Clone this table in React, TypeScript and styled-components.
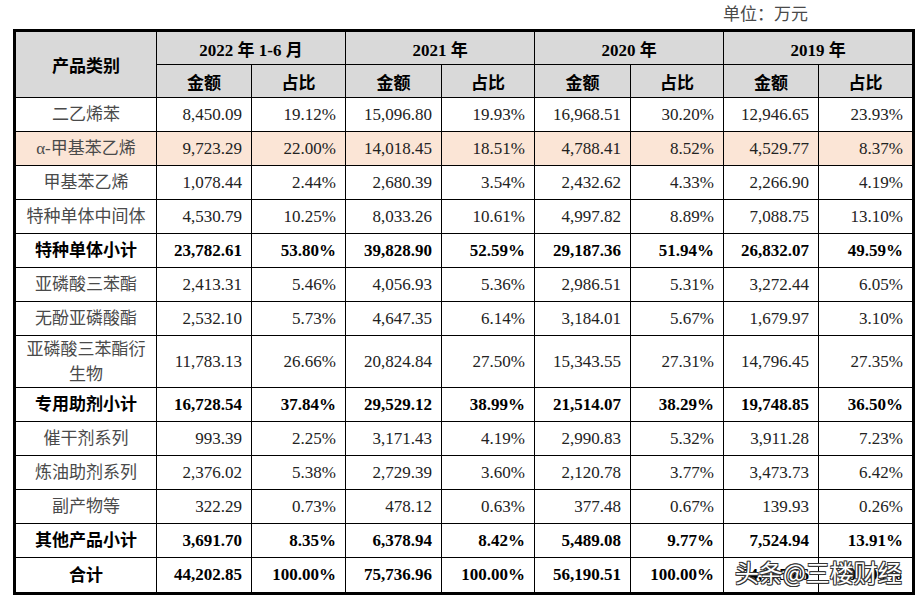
import React from "react";
import styled, { createGlobalStyle } from "styled-components";

const GlobalStyle = createGlobalStyle`
  *, *::before, *::after {
    box-sizing: border-box;
  }
  html, body {
    margin: 0;
    padding: 0;
    background: #ffffff;
  }
`;

const Page = styled.div`
  position: relative;
  width: 921px;
  height: 598px;
  padding: 4px 0 0 13px;
  font-family: "Liberation Serif", "Noto Sans CJK SC", serif;
  color: #1a1a1a;
  overflow: hidden;
`;

const Unit = styled.div`
  width: 902px;
  height: 25px;
  padding-right: 107px;
  text-align: right;
  font-size: 17px;
  line-height: 22px;
  color: #4a4a4a;
`;

const Table = styled.table`
  border-collapse: separate;
  border-spacing: 0;
  table-layout: fixed;
  width: 902px;
  border: 3px solid #000;
`;

const HeadCell = styled.th<{ $h: number }>`
  height: ${(p) => p.$h}px;
  padding: 0;
  background: #d9d9d9;
  border-right: 1px solid #000;
  border-bottom: 1px solid #000;
  font-size: 17px;
  font-weight: 700;
  text-align: center;
  color: #000;

  &:last-child {
    border-right: none;
  }
`;

const Row = styled.tr<{ $hl?: boolean }>`
  background: ${(p) => (p.$hl ? "#fbe5d6" : "#ffffff")};

  &:last-child td {
    border-bottom: none;
  }
`;

const Label = styled.td<{ $h: number; $bold?: boolean }>`
  height: ${(p) => p.$h}px;
  padding: 0 8px;
  border-right: 1px solid #000;
  border-bottom: 1px solid #000;
  font-size: 17px;
  line-height: 25px;
  text-align: center;
  font-weight: ${(p) => (p.$bold ? 700 : 400)};
  color: ${(p) => (p.$bold ? "#000" : "#4a4a4a")};
`;

const Num = styled.td<{ $bold?: boolean }>`
  padding: 0 9px 0 0;
  border-right: 1px solid #000;
  border-bottom: 1px solid #000;
  font-size: 17px;
  text-align: right;
  white-space: nowrap;
  font-weight: ${(p) => (p.$bold ? 700 : 400)};
  color: ${(p) => (p.$bold ? "#000" : "#222")};

  &:last-child {
    border-right: none;
  }
`;

// the "头条@三楼财经" stamp lying over the last row
const Watermark = styled.div`
  position: absolute;
  left: 735px;
  top: 557px;
  font-family: "Noto Sans CJK SC", sans-serif;
  font-size: 24px;
  line-height: 30px;
  letter-spacing: 0;
  color: #ffffff;
  text-shadow: 1px 1px 0 #333, -1px -1px 0 #333, 1px -1px 0 #333,
    -1px 1px 0 #333, 0 1px 0 #333, 0 -1px 0 #333;
`;

const widths = [141, 95, 94, 96, 93, 96, 93, 95, 93];
const years = ["2022 年 1-6 月", "2021 年", "2020 年", "2019 年"];

type Item = {
  label: string;
  vals: string[];
  bold?: boolean;
  hl?: boolean;
  tall?: boolean;
};

const rows: Item[] = [
  { label: "二乙烯苯", vals: ["8,450.09", "19.12%", "15,096.80", "19.93%", "16,968.51", "30.20%", "12,946.65", "23.93%"] },
  { label: "α-甲基苯乙烯", hl: true, vals: ["9,723.29", "22.00%", "14,018.45", "18.51%", "4,788.41", "8.52%", "4,529.77", "8.37%"] },
  { label: "甲基苯乙烯", vals: ["1,078.44", "2.44%", "2,680.39", "3.54%", "2,432.62", "4.33%", "2,266.90", "4.19%"] },
  { label: "特种单体中间体", vals: ["4,530.79", "10.25%", "8,033.26", "10.61%", "4,997.82", "8.89%", "7,088.75", "13.10%"] },
  { label: "特种单体小计", bold: true, vals: ["23,782.61", "53.80%", "39,828.90", "52.59%", "29,187.36", "51.94%", "26,832.07", "49.59%"] },
  { label: "亚磷酸三苯酯", vals: ["2,413.31", "5.46%", "4,056.93", "5.36%", "2,986.51", "5.31%", "3,272.44", "6.05%"] },
  { label: "无酚亚磷酸酯", vals: ["2,532.10", "5.73%", "4,647.35", "6.14%", "3,184.01", "5.67%", "1,679.97", "3.10%"] },
  { label: "亚磷酸三苯酯衍生物", tall: true, vals: ["11,783.13", "26.66%", "20,824.84", "27.50%", "15,343.55", "27.31%", "14,796.45", "27.35%"] },
  { label: "专用助剂小计", bold: true, vals: ["16,728.54", "37.84%", "29,529.12", "38.99%", "21,514.07", "38.29%", "19,748.85", "36.50%"] },
  { label: "催干剂系列", vals: ["993.39", "2.25%", "3,171.43", "4.19%", "2,990.83", "5.32%", "3,911.28", "7.23%"] },
  { label: "炼油助剂系列", vals: ["2,376.02", "5.38%", "2,729.39", "3.60%", "2,120.78", "3.77%", "3,473.73", "6.42%"] },
  { label: "副产物等", vals: ["322.29", "0.73%", "478.12", "0.63%", "377.48", "0.67%", "139.93", "0.26%"] },
  { label: "其他产品小计", bold: true, vals: ["3,691.70", "8.35%", "6,378.94", "8.42%", "5,489.08", "9.77%", "7,524.94", "13.91%"] },
  { label: "合计", bold: true, vals: ["44,202.85", "100.00%", "75,736.96", "100.00%", "56,190.51", "100.00%", "54,105.86", "100.00%"] },
];

const App: React.FC = () => {
  return (
    <Page>
      <GlobalStyle />
      <Unit>单位：万元</Unit>
      <Table>
        <colgroup>
          {widths.map((w, i) => (
            <col key={i} style={{ width: w }} />
          ))}
        </colgroup>
        <thead>
          <tr>
            <HeadCell $h={33} rowSpan={2}>
              产品类别
            </HeadCell>
            {years.map((y) => (
              <HeadCell key={y} $h={33} colSpan={2}>
                {y}
              </HeadCell>
            ))}
          </tr>
          <tr>
            {years.map((y) => (
              <React.Fragment key={y}>
                <HeadCell $h={33}>金额</HeadCell>
                <HeadCell $h={33}>占比</HeadCell>
              </React.Fragment>
            ))}
          </tr>
        </thead>
        <tbody>
          {rows.map((r) => (
            <Row key={r.label} $hl={r.hl}>
              <Label $h={r.tall ? 52 : 34} $bold={r.bold}>
                {r.label}
              </Label>
              {r.vals.map((v, i) => (
                <Num key={i} $bold={r.bold}>
                  {v}
                </Num>
              ))}
            </Row>
          ))}
        </tbody>
      </Table>
      <Watermark>头条@三楼财经</Watermark>
    </Page>
  );
};

export default App;
